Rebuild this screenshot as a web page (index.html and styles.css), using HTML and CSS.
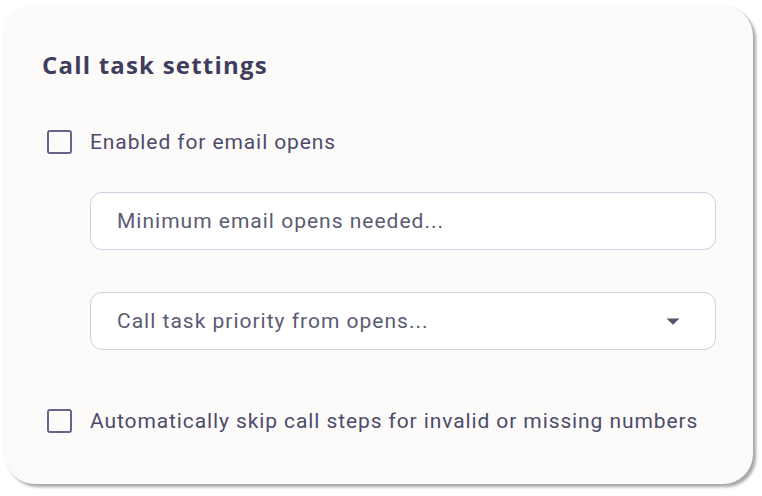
FILE: index.html
```html
<!DOCTYPE html>
<html>
<head>
<meta charset="utf-8">
<link rel="stylesheet" href="styles.css">
</head>
<body>
<div class="card">
  <h2 class="title">Call task settings</h2>
  <label class="check-row first">
    <span class="box"></span>
    <span class="label">Enabled for email opens</span>
  </label>
  <div class="field input">
    <span class="placeholder">Minimum email opens needed...</span>
  </div>
  <div class="field select">
    <span class="placeholder">Call task priority from opens...</span>
    <svg class="caret" width="14" height="7" viewBox="0 0 14 7"><path d="M0.5 0.5 H13.5 L7 6.8 Z" fill="#555370"/></svg>
  </div>
  <label class="check-row last">
    <span class="box"></span>
    <span class="label">Automatically skip call steps for invalid or missing numbers</span>
  </label>
</div>
</body>
</html>
```

FILE: styles.css
```css
html, body {
  margin: 0;
  padding: 0;
  background: #ffffff;
}
body {
  width: 762px;
  height: 496px;
  overflow: hidden;
}
.card {
  box-sizing: border-box;
  margin: 6px 0 0 5px;
  width: 748px;
  height: 478px;
  background: #fcfbfa;
  border-radius: 30px;
  box-shadow: 3px 3px 3px rgba(60, 60, 60, 0.45), -1px -1px 3px rgba(0, 0, 0, 0.04);
  padding: 45px 37px 0 42px;
  display: flex;
  flex-direction: column;
  font-family: Roboto, "Liberation Sans", sans-serif;
}
.title {
  margin: 0 0 0 -5px;
  font-family: "Open Sans", "Liberation Sans", sans-serif;
  font-weight: 700;
  font-size: 24px;
  letter-spacing: 1.2px;
  line-height: 28px;
  color: #3f3d5c;
}
.check-row {
  display: flex;
  align-items: center;
  gap: 18px;
  height: 24px;
}
.check-row.first {
  margin-top: 51px;
}
.check-row.last {
  margin-top: 59px;
}
.box {
  box-sizing: border-box;
  width: 25px;
  height: 24px;
  border: 2.5px solid #66648a;
  border-radius: 3px;
  background: #fcfbfa;
  flex: none;
}
.label {
  font-size: 21px;
  letter-spacing: 0.9px;
  color: #4d4b6b;
  white-space: nowrap;
}
.field {
  box-sizing: border-box;
  margin-left: 43px;
  width: 626px;
  height: 58px;
  background: #ffffff;
  border: 1px solid #cfcfe0;
  border-radius: 12px;
  display: flex;
  align-items: center;
  justify-content: space-between;
  padding: 0 35px 0 26px;
}
.input {
  margin-top: 38px;
}
.select {
  margin-top: 42px;
}
.placeholder {
  font-size: 21px;
  letter-spacing: 1px;
  color: #5c5b72;
  white-space: nowrap;
}
.caret {
  display: block;
}
```
